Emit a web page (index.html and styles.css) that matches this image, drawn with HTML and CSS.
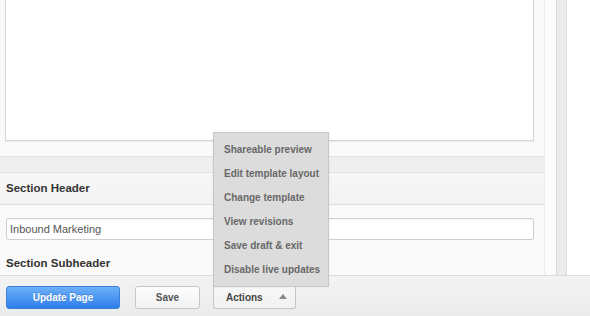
FILE: index.html
```html
<!DOCTYPE html>
<html lang="en">

<head>
    <meta charset="UTF-8">
    <title>Page editor</title>
    <link rel="stylesheet" href="styles.css">
</head>

<body>
    <div class="main">
        <div class="editor">
            <div class="content-box"></div>

            <div class="section-top"></div>
            <div class="section-header">Section Header</div>
            <div class="fields">
                <div class="input">Inbound Marketing</div>
                <div class="label">Section Subheader</div>
                <div class="input"></div>
            </div>
        </div>
        <div class="gutter"></div>
        <div class="scroll"></div>
        <div class="preview"></div>
    </div>

    <div class="footer">
        <span class="btn btn-primary">Update Page</span>
        <span class="btn btn-save">Save</span>
        <div class="actions">
            <ul class="menu">
                <li>Shareable preview</li>
                <li>Edit template layout</li>
                <li>Change template</li>
                <li>View revisions</li>
                <li>Save draft &amp; exit</li>
                <li>Disable live updates</li>
            </ul>
            <span class="btn btn-actions">Actions <i class="caret"></i></span>
        </div>
    </div>
</body>

</html>
```

FILE: styles.css
```css
body,
ul,
li {
    margin: 0;
    padding: 0;
    list-style: none;
}

body {
    width: 590px;
    height: 316px;
    overflow: hidden;
    font-family: "Liberation Sans", Arial, Helvetica, sans-serif;
    background: #fff;
}

.main {
    display: flex;
    height: 275px;
}

.editor {
    width: 544px;
    background: #fafafa;
    overflow: hidden;
}

.gutter {
    width: 11px;
    border-left: 1px solid #ececec;
    background: #fbfbfb;
}

.scroll {
    width: 9px;
    border-left: 1px solid #dcdcdc;
    border-right: 1px solid #dedede;
    background: #ebebeb;
}

.preview {
    flex: 1;
    background: #fff;
}

/* editor */
.content-box {
    height: 140px;
    margin: 0 10px 15px 5px;
    background: #fff;
    border: 1px solid #d6d6d6;
    border-top: 0;
    box-shadow: 0 1px 1px rgba(0, 0, 0, 0.05);
}

.section-top {
    height: 15px;
    border-top: 1px solid #e2e2e2;
    border-bottom: 1px solid #e0e0e0;
    background: #efefef;
}

.section-header {
    height: 31px;
    line-height: 31px;
    padding: 0 6px;
    background: linear-gradient(#f7f7f7, #f3f3f3);
    border-bottom: 1px solid #dedede;
    font-size: 11.5px;
    font-weight: bold;
    color: #333;
}

.fields {
    padding: 13px 10px 0 6px;
}

.input {
    height: 20px;
    line-height: 20px;
    padding: 0 3px;
    background: #fff;
    border: 1px solid #cfcfcf;
    border-radius: 2px;
    box-shadow: inset 0 1px 1px rgba(0, 0, 0, 0.04);
    font-size: 11px;
    color: #555;
}

.label {
    margin: 15px 0 4px;
    line-height: 16px;
    font-size: 11.5px;
    font-weight: bold;
    color: #333;
}

/* footer */
.footer {
    display: flex;
    align-items: flex-start;
    height: 30px;
    padding: 10px 0 0 6px;
    border-top: 1px solid #dcdcdc;
    background: linear-gradient(#f3f3f3, #ebebeb);
}

.btn {
    display: block;
    box-sizing: border-box;
    height: 23px;
    line-height: 21px;
    border: 1px solid #c6c6c6;
    border-radius: 3px;
    background: linear-gradient(#fdfdfd, #f1f1f1);
    font-size: 10px;
    font-weight: bold;
    color: #555;
    text-align: center;
}

.btn-primary {
    width: 114px;
    border-color: #3a7fd9;
    background: linear-gradient(#6cb0f8, #2e7eea);
    color: #fff;
    text-shadow: 0 -1px 0 rgba(0, 0, 0, 0.2);
}

.btn-save {
    width: 65px;
    margin-left: 15px;
}

.actions {
    position: relative;
    margin-left: 13px;
}

.btn-actions {
    width: 83px;
    padding-left: 12px;
    border-top-color: #cfcfcf;
    border-radius: 0 0 3px 3px;
    background: linear-gradient(#f7f7f7, #f1f1f1);
    color: #444;
    text-align: left;
}

.caret {
    display: inline-block;
    margin-left: 14px;
    vertical-align: 2px;
    border-left: 4px solid transparent;
    border-right: 4px solid transparent;
    border-bottom: 5px solid #888;
}

.menu {
    position: absolute;
    left: 0;
    bottom: 22px;
    width: 114px;
    padding: 5px 0 4px;
    background: #dcdcdc;
    border: 1px solid #c8c8c8;
    box-shadow: 0 0 2px rgba(0, 0, 0, 0.08);
}

.menu li {
    height: 24px;
    line-height: 24px;
    padding-left: 10px;
    font-size: 10px;
    font-weight: bold;
    color: #686868;
    white-space: nowrap;
}
```
